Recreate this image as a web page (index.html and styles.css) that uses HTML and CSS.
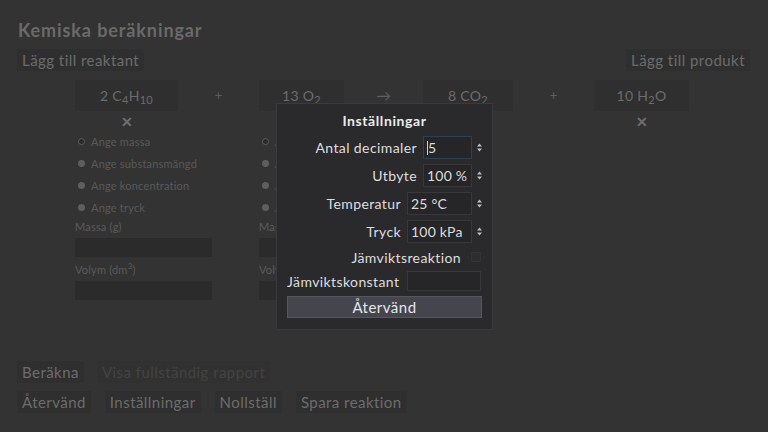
FILE: index.html
```html
<!DOCTYPE html>
<html lang="sv">
<head>
<meta charset="utf-8">
<title>Kemiska beräkningar</title>
<link rel="stylesheet" href="styles.css">
</head>
<body>
<div class="app">
  <h1 class="title">Kemiska beräkningar</h1>
  <div class="toolbar">
    <button class="btn">Lägg till reaktant</button>
    <button class="btn">Lägg till produkt</button>
  </div>

  <div class="equation">
    <div class="compound c1">
      <div class="formula">2 C<sub>4</sub>H<sub>10</sub></div>
      <div class="remove">✕</div>
      <ul class="options">
        <li><span class="radio on"></span>Ange massa</li>
        <li><span class="radio"></span>Ange substansmängd</li>
        <li><span class="radio"></span>Ange koncentration</li>
        <li><span class="radio"></span>Ange tryck</li>
      </ul>
      <label class="field-label">Massa (g)</label>
      <div class="field"></div>
      <label class="field-label">Volym (dm<sup>3</sup>)</label>
      <div class="field"></div>
    </div>
    <div class="op op1">+</div>
    <div class="compound c2">
      <div class="formula">13 O<sub>2</sub></div>
      <div class="remove">✕</div>
      <ul class="options">
        <li><span class="radio on"></span>Ange massa</li>
        <li><span class="radio"></span>Ange substansmängd</li>
        <li><span class="radio"></span>Ange koncentration</li>
        <li><span class="radio"></span>Ange tryck</li>
      </ul>
      <label class="field-label">Massa (g)</label>
      <div class="field"></div>
      <label class="field-label">Volym (dm<sup>3</sup>)</label>
      <div class="field"></div>
    </div>
    <div class="op op2">→</div>
    <div class="compound c3">
      <div class="formula">8 CO<sub>2</sub></div>
      <div class="remove">✕</div>
    </div>
    <div class="op op3">+</div>
    <div class="compound c4">
      <div class="formula">10 H<sub>2</sub>O</div>
      <div class="remove">✕</div>
    </div>
  </div>

  <div class="actions">
    <div class="row">
      <button class="btn">Beräkna</button>
      <button class="btn disabled">Visa fullständig rapport</button>
    </div>
    <div class="row">
      <button class="btn">Återvänd</button>
      <button class="btn">Inställningar</button>
      <button class="btn">Nollställ</button>
      <button class="btn">Spara reaktion</button>
    </div>
  </div>
</div>

<div class="modal">
  <h2 class="modal-title">Inställningar</h2>
  <div class="setting">
    <span class="lbl">Antal decimaler</span>
    <span class="input w49 focus"><span class="caret"></span>5</span>
    <span class="spin"><svg width="5" height="9" viewBox="0 0 5 9"><path d="M0 3.5 L2.5 0.5 L5 3.5Z M0 5.5 L2.5 8.5 L5 5.5Z" fill="#bdbdbd"/></svg></span>
  </div>
  <div class="setting">
    <span class="lbl">Utbyte</span>
    <span class="input w49">100 %</span>
    <span class="spin"><svg width="5" height="9" viewBox="0 0 5 9"><path d="M0 3.5 L2.5 0.5 L5 3.5Z M0 5.5 L2.5 8.5 L5 5.5Z" fill="#bdbdbd"/></svg></span>
  </div>
  <div class="setting">
    <span class="lbl">Temperatur</span>
    <span class="input w65">25 °C</span>
    <span class="spin"><svg width="5" height="9" viewBox="0 0 5 9"><path d="M0 3.5 L2.5 0.5 L5 3.5Z M0 5.5 L2.5 8.5 L5 5.5Z" fill="#bdbdbd"/></svg></span>
  </div>
  <div class="setting">
    <span class="lbl">Tryck</span>
    <span class="input w65">100 kPa</span>
    <span class="spin"><svg width="5" height="9" viewBox="0 0 5 9"><path d="M0 3.5 L2.5 0.5 L5 3.5Z M0 5.5 L2.5 8.5 L5 5.5Z" fill="#bdbdbd"/></svg></span>
  </div>
  <div class="setting check-row">
    <span class="lbl">Jämviktsreaktion</span>
    <span class="checkbox"></span>
  </div>
  <div class="setting const-row">
    <span class="lbl">Jämviktskonstant</span>
    <span class="input w74"></span>
  </div>
  <button class="modal-btn">Återvänd</button>
</div>
</body>
</html>
```

FILE: styles.css
```css
* { box-sizing: border-box; }

html, body {
  margin: 0;
  padding: 0;
  width: 768px;
  height: 432px;
  overflow: hidden;
  background: #333333;
  font-family: "Lato", "Noto Sans", sans-serif;
}

.app {
  padding: 17px 18px 0 17px;
  color: #6c6c6c;
}

.title {
  margin: 0 0 0 1px;
  font-size: 18px;
  font-weight: 700;
  letter-spacing: 0.9px;
  line-height: 26px;
  color: #6a6a6a;
}

.btn {
  font-family: inherit;
  font-size: 15px;
  letter-spacing: 0.45px;
  line-height: 18px;
  height: 22px;
  color: #6c6c6c;
  background: #2f2f2f;
  border: 0;
  padding: 2px 5px;
  margin: 0;
  white-space: nowrap;
}

.btn.disabled {
  color: #434343;
  background: #313131;
}

.toolbar {
  display: flex;
  justify-content: space-between;
  margin-top: 6px;
}

.equation {
  display: flex;
  align-items: flex-start;
  margin-top: 9px;
  padding-left: 58px;
}

.compound {
  display: flex;
  flex-direction: column;
  align-items: flex-start;
}

.c1 { width: 103px; }
.c2 { width: 85px; }
.c3 { width: 90px; }
.c4 { width: 95px; }

.formula {
  width: 100%;
  height: 31px;
  background: #2f2f2f;
  color: #6c6c6c;
  font-size: 14px;
  letter-spacing: 0.3px;
  line-height: 31px;
  text-align: center;
}

.formula sub {
  font-size: 11px;
  vertical-align: -3px;
  line-height: 0;
}

.remove {
  align-self: center;
  color: #6e6e6e;
  font-size: 14px;
  font-weight: 700;
  line-height: 16px;
  margin-top: 3px;
}

.op {
  text-align: center;
  color: #5e5e5e;
  font-size: 13px;
  line-height: 31px;
}

.op1 { width: 81px; }
.op2 { width: 79px; font-size: 15px; }
.op3 { width: 81px; }

.options {
  list-style: none;
  margin: 0;
  padding: 0;
  white-space: nowrap;
}

.options li {
  display: flex;
  align-items: center;
  height: 22px;
  font-size: 11px;
  letter-spacing: 0.2px;
  color: #595959;
  padding-left: 3px;
}

.radio {
  display: inline-block;
  width: 7px;
  height: 7px;
  border-radius: 50%;
  background: #5e5e5e;
  margin-right: 6px;
}

.radio.on {
  background: #2a2a2a;
  border: 1.5px solid #5e5e5e;
}

.field-label {
  display: block;
  font-size: 11px;
  letter-spacing: 0.2px;
  line-height: 14px;
  color: #5b5b5b;
  white-space: nowrap;
  margin-top: 2px;
}

.field-label sup {
  font-size: 8px;
  line-height: 0;
}

.field {
  width: 137px;
  height: 19px;
  background: #2b2b2b;
  margin-top: 4px;
  margin-bottom: 4px;
}

.actions {
  margin-top: 57px;
  display: flex;
  flex-direction: column;
  gap: 8px;
}

.actions .row {
  display: flex;
  gap: 13px;
}

.actions .row + .row { gap: 14px; }

/* settings dialog overlay */
.modal {
  position: absolute;
  left: 276px;
  top: 103px;
  width: 217px;
  height: 227px;
  background: #2a2a2d;
  border: 1px solid #3a3a3e;
  padding: 6px 10px 0 10px;
  color: #dedede;
  font-size: 14px;
  letter-spacing: 0.4px;
}

.modal-title {
  margin: 0 0 4px 0;
  text-align: center;
  font-size: 14px;
  font-weight: 700;
  letter-spacing: 0.6px;
  line-height: 22px;
  color: #ececec;
}

.setting {
  display: flex;
  justify-content: flex-end;
  align-items: center;
  height: 23px;
  margin-bottom: 5px;
}

.lbl {
  margin-right: 6px;
  white-space: nowrap;
}

.input {
  height: 23px;
  line-height: 21px;
  background: #262628;
  border: 1px solid #38383b;
  padding: 0 3px;
  display: inline-flex;
  align-items: center;
  color: #dcdcdc;
  letter-spacing: 0.2px;
  white-space: nowrap;
}

.input.focus {
  border-color: #2e4152;
}

.caret {
  display: inline-block;
  width: 1px;
  height: 14px;
  background: #cfcfcf;
}

.w49 { width: 49px; }
.w65 { width: 65px; }
.w74 { width: 74px; height: 20px; }

.spin {
  width: 10px;
  display: flex;
  justify-content: flex-end;
}

.check-row {
  height: 18px;
  padding-right: 1px;
}

.check-row .lbl { margin-right: 10px; }

.checkbox {
  width: 10px;
  height: 10px;
  background: #2d2d30;
  border: 1px solid #343437;
}

.const-row {
  height: 20px;
  margin-bottom: 0;
  justify-content: space-between;
  padding-right: 1px;
}

.modal-btn {
  display: block;
  width: 195px;
  height: 22px;
  margin-top: 5px;
  font-family: inherit;
  font-size: 15px;
  letter-spacing: 0.5px;
  color: #e6e6e6;
  background: #45454e;
  border: 1px solid #56565e;
  padding: 0;
}
```
